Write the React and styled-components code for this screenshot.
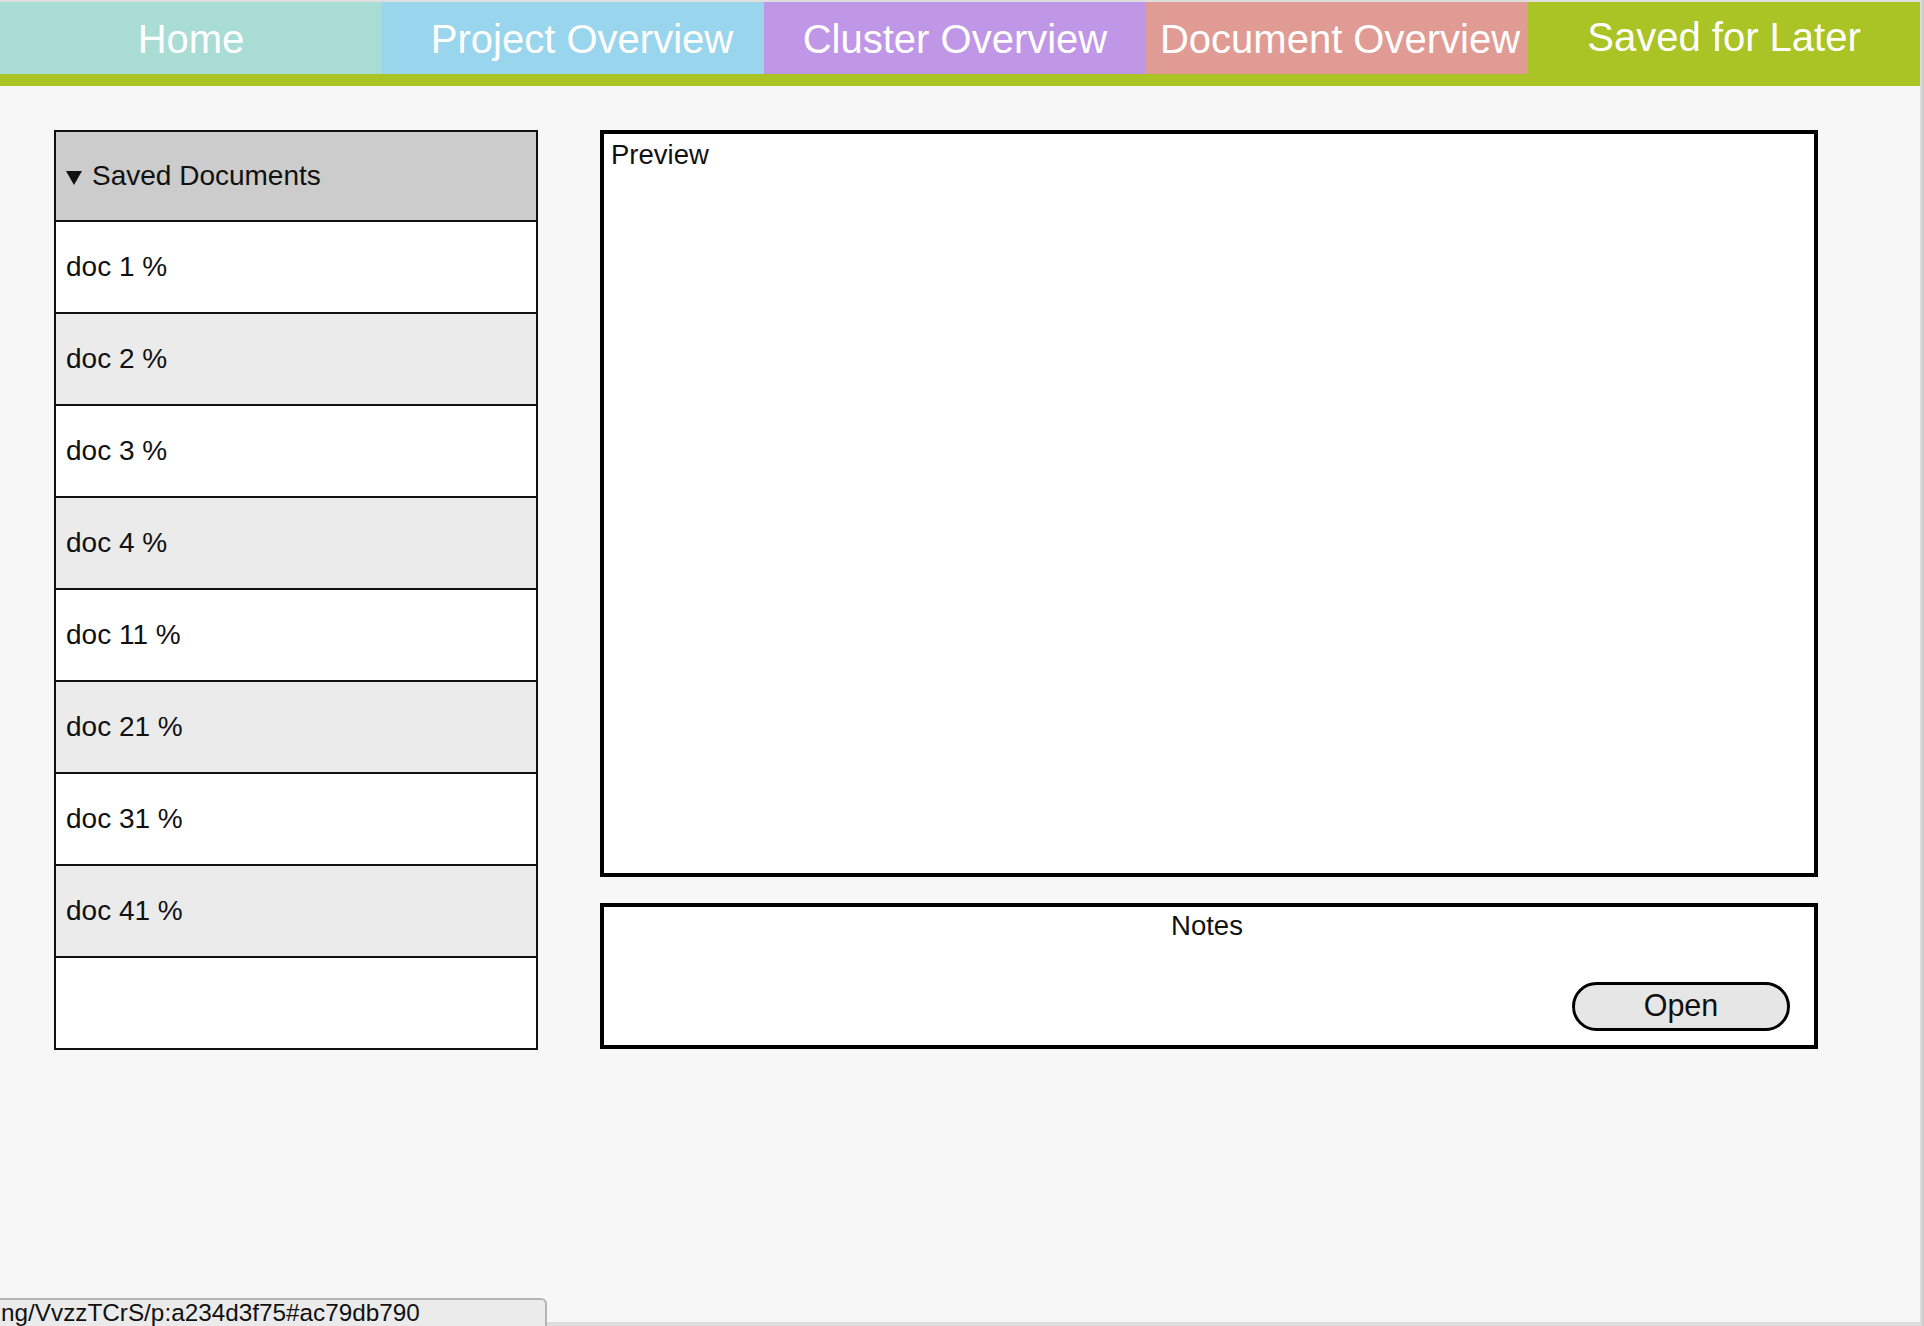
import React from "react";
import styled, { createGlobalStyle } from "styled-components";

const GlobalStyle = createGlobalStyle`
  html, body {
    margin: 0;
    padding: 0;
    background: #d6d6d6;
    font-family: "Liberation Sans", Arial, Helvetica, sans-serif;
  }
  * { box-sizing: border-box; }
`;

const Viewport = styled.div`
  position: relative;
  width: 1924px;
  height: 1326px;
  padding-top: 2px;
  overflow: hidden;
  background: linear-gradient(to right, #dedede 0, #dedede 1920px, #c8c8c8 1924px);
`;

const Canvas = styled.div`
  width: 1920px;
  height: 1320px;
  background: #f7f7f7;
  display: flex;
  flex-direction: column;
`;

const Nav = styled.nav`
  display: flex;
  background: #aac425;
  padding-bottom: 12px;
`;

const Tab = styled.div`
  flex: ${(p) => (p.$grow ? "1 1 auto" : "0 0 382px")};
  height: 72px;
  background: ${(p) => p.$color};
  color: #ffffff;
  font-size: 40px;
  display: flex;
  align-items: center;
  justify-content: center;
  padding-top: ${(p) => (p.$active ? "0" : "3px")};
  padding-bottom: ${(p) => (p.$active ? "2px" : "0")};
  padding-left: ${(p) => p.$shift || 0}px;
  white-space: nowrap;
`;

const Content = styled.main`
  display: flex;
  align-items: flex-start;
  gap: 62px;
  padding: 44px 0 0 54px;
`;

const DocList = styled.section`
  width: 484px;
  border: 2px solid #111;
  display: flex;
  flex-direction: column;
  background: #fff;
`;

const ListHeader = styled.div`
  height: 90px;
  background: #cccccc;
  border-bottom: 2px solid #111;
  display: flex;
  align-items: center;
  padding-left: 10px;
  font-size: 28px;
  color: #111;
  gap: 10px;
`;

const Caret = styled.span`
  display: inline-block;
  width: 0;
  height: 0;
  border-left: 8px solid transparent;
  border-right: 8px solid transparent;
  border-top: 14px solid #111;
  transform: translateY(2px);
`;

const DocRow = styled.div`
  height: ${(p) => (p.$last ? "90px" : "92px")};
  background: ${(p) => (p.$alt ? "#ebebeb" : "#ffffff")};
  border-bottom: ${(p) => (p.$last ? "none" : "2px solid #111")};
  display: flex;
  align-items: center;
  padding-left: 10px;
  font-size: 28px;
  color: #111;
`;

const RightCol = styled.div`
  width: 1218px;
  display: flex;
  flex-direction: column;
  gap: 26px;
`;

const PreviewBox = styled.section`
  height: 747px;
  border: 4px solid #000;
  background: #fff;
  padding: 5px 7px;
  font-size: 27.5px;
  line-height: 1.15;
  color: #111;
`;

const NotesBox = styled.section`
  height: 146px;
  border: 4px solid #000;
  background: #fff;
  display: flex;
  flex-direction: column;
  padding: 3px 24px 14px 8px;
  font-size: 27.5px;
  line-height: 1.15;
  color: #111;
`;

const NotesTitle = styled.div`
  text-align: center;
  padding-left: 12px;
`;

const NotesFooter = styled.div`
  margin-top: auto;
  display: flex;
  justify-content: flex-end;
`;

const PillButton = styled.button`
  width: 218px;
  height: 49px;
  border: 3.5px solid #000;
  border-radius: 25px;
  background: #e6e6e6;
  font-family: "Liberation Sans", Arial, Helvetica, sans-serif;
  font-size: 30.5px;
  color: #111;
  padding: 0 0 3px;
  display: flex;
  align-items: center;
  justify-content: center;
  cursor: pointer;
`;

const StatusBar = styled.div`
  position: absolute;
  left: -2px;
  bottom: -2px;
  width: 549px;
  height: 30px;
  background: #ebebeb;
  border: 2px solid #b5b5b5;
  border-top-right-radius: 6px;
  font-size: 24.3px;
  line-height: 26px;
  color: #111;
  white-space: nowrap;
  overflow: hidden;
  padding-left: 1px;
`;

const tabs = [
  { label: "Home", color: "#aadcd6" },
  { label: "Project Overview", color: "#9ad5ee", shift: 18 },
  { label: "Cluster Overview", color: "#c096e7" },
  { label: "Document Overview", color: "#e09c94", shift: 6 },
  { label: "Saved for Later", color: "#aac425", active: true },
];

const docs = ["doc 1 %", "doc 2 %", "doc 3 %", "doc 4 %", "doc 11 %", "doc 21 %", "doc 31 %", "doc 41 %", ""];

export default function App() {
  return (
    <>
      <GlobalStyle />
      <Viewport>
        <Canvas>
          <Nav>
            {tabs.map((t) => (
              <Tab key={t.label} $color={t.color} $active={t.active} $grow={t.active} $shift={t.shift}>
                {t.label}
              </Tab>
            ))}
          </Nav>
          <Content>
            <DocList>
              <ListHeader>
                <Caret />
                <span>Saved Documents</span>
              </ListHeader>
              {docs.map((d, i) => (
                <DocRow key={i} $alt={i % 2 === 1} $last={i === docs.length - 1}>
                  {d}
                </DocRow>
              ))}
            </DocList>
            <RightCol>
              <PreviewBox>Preview</PreviewBox>
              <NotesBox>
                <NotesTitle>Notes</NotesTitle>
                <NotesFooter>
                  <PillButton>Open</PillButton>
                </NotesFooter>
              </NotesBox>
            </RightCol>
          </Content>
        </Canvas>
        <StatusBar>ng/VvzzTCrS/p:a234d3f75#ac79db790</StatusBar>
      </Viewport>
    </>
  );
}
